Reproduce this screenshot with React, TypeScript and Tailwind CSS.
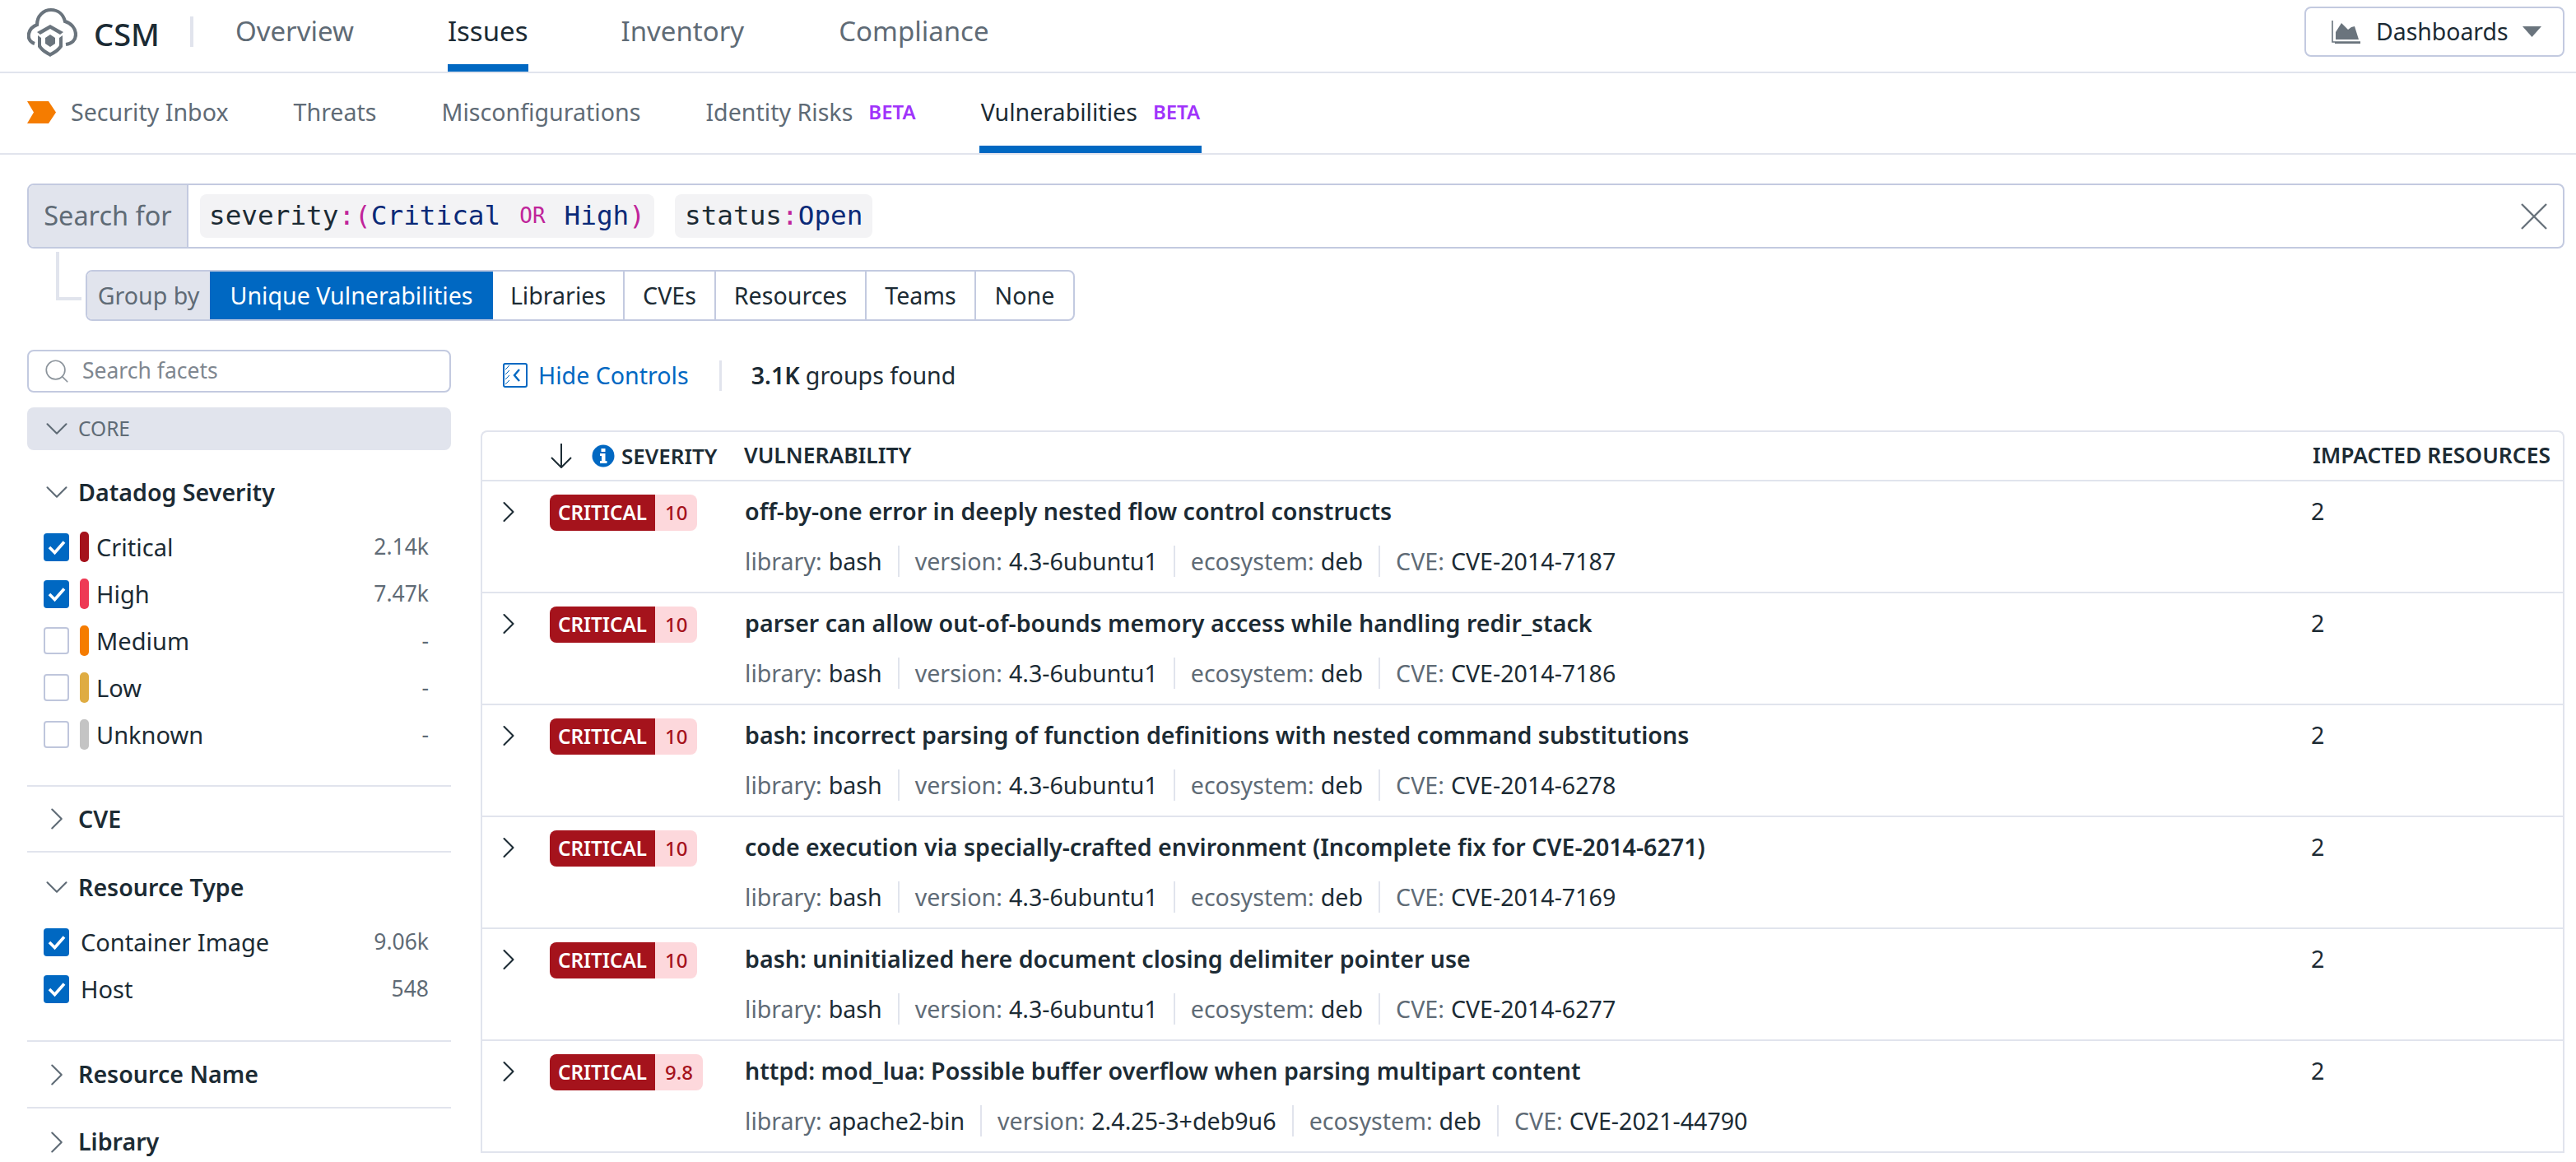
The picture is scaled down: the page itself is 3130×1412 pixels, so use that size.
import { ChevronDown, ChevronRight, Search } from "lucide-react";

const rows = [
  { score: "10", title: "off-by-one error in deeply nested flow control constructs", library: "bash", version: "4.3-6ubuntu1", cve: "CVE-2014-7187" },
  { score: "10", title: "parser can allow out-of-bounds memory access while handling redir_stack", library: "bash", version: "4.3-6ubuntu1", cve: "CVE-2014-7186" },
  { score: "10", title: "bash: incorrect parsing of function definitions with nested command substitutions", library: "bash", version: "4.3-6ubuntu1", cve: "CVE-2014-6278" },
  { score: "10", title: "code execution via specially-crafted environment (Incomplete fix for CVE-2014-6271)", library: "bash", version: "4.3-6ubuntu1", cve: "CVE-2014-7169" },
  { score: "10", title: "bash: uninitialized here document closing delimiter pointer use", library: "bash", version: "4.3-6ubuntu1", cve: "CVE-2014-6277" },
  { score: "9.8", title: "httpd: mod_lua: Possible buffer overflow when parsing multipart content", library: "apache2-bin", version: "2.4.25-3+deb9u6", cve: "CVE-2021-44790" },
];

const severities = [
  { label: "Critical", count: "2.14k", checked: true, color: "bg-[#a5131c]" },
  { label: "High", count: "7.47k", checked: true, color: "bg-[#ee3a54]" },
  { label: "Medium", count: "-", checked: false, color: "bg-[#f57c00]" },
  { label: "Low", count: "-", checked: false, color: "bg-[#dfac42]" },
  { label: "Unknown", count: "-", checked: false, color: "bg-[#c4c4c4]" },
];

const groupOptions = [
  { label: "Libraries", width: "w-[160px]" },
  { label: "CVEs", width: "w-[111px]" },
  { label: "Resources", width: "w-[183px]" },
  { label: "Teams", width: "w-[133px]" },
  { label: "None", width: "w-[118px]" },
];

function Check({ checked }: { checked: boolean }) {
  if (!checked) {
    return <div className="w-[31px] h-[33px] rounded-[4px] border-[2px] border-[#bfc6dc] bg-white shrink-0" />;
  }
  return (
    <div className="w-[31px] h-[34px] rounded-[4px] bg-[#0068c2] flex items-center justify-center shrink-0">
      <svg width="24" height="20" viewBox="0 0 24 20">
        <path d="M3 10L9.5 16.5L21 3.5" fill="none" stroke="#fff" strokeWidth="3.6" />
      </svg>
    </div>
  );
}

function FacetTitle({ label, open }: { label: string; open?: boolean }) {
  return (
    <div className="flex items-center h-[40px]">
      <div className="w-[46px] ml-[13px] h-[40px] flex items-center justify-center shrink-0">
        {open ? (
          <ChevronDown size={46} strokeWidth={1.1} className="text-[#5f6b76] shrink-0" />
        ) : (
          <ChevronRight size={46} strokeWidth={1.1} className="text-[#5f6b76] shrink-0" />
        )}
      </div>
      <span className="ml-[3px] text-[28.6px] font-semibold text-[#1c2b34]">{label}</span>
    </div>
  );
}

function FacetRow({ label, count, checked, color }: { label: string; count: string; checked: boolean; color?: string }) {
  return (
    <div className="flex items-center h-[57px] pl-[20px] pr-[27px]">
      <Check checked={checked} />
      {color && <div className={`ml-[13px] w-[11px] h-[37px] rounded-[5px] ${color}`} />}
      <span className={`text-[29px] text-[#1c2b34] ${color ? "ml-[9px]" : "ml-[14px]"}`}>{label}</span>
      <span className="ml-auto text-[26.5px] text-[#5f6b76]">{count}</span>
    </div>
  );
}

function Meta({ name, value, last }: { name: string; value: string; last?: boolean }) {
  return (
    <div className="flex items-center">
      <span className="text-[#5f6b76]">{name}:</span>
      <span className="ml-[8px] text-[#1c2b34]">{value}</span>
      {!last && <div className="mx-[19px] w-[2px] h-[38px] bg-[#e1e4ed]" />}
    </div>
  );
}

function Row({ row }: { row: (typeof rows)[number] }) {
  return (
    <div className="flex border-b-[2px] border-[#e1e4ed] h-[136px]">
      <div className="w-[82px] pt-[15px] pl-[10px] shrink-0">
        <ChevronRight size={44} strokeWidth={1.15} className="text-[#1c2b34]" />
      </div>
      <div className="w-[237px] pt-[16px] shrink-0">
        <div className="flex h-[44px] w-fit rounded-[8px] overflow-hidden text-[24px]">
          <div className="w-[128px] bg-[#a5131c] text-white flex items-center justify-center text-[24.3px] font-semibold whitespace-nowrap">CRITICAL</div>
          <div className="bg-[#fdd8dc] text-[#a5131c] px-[12px] flex items-center font-medium">{row.score}</div>
        </div>
      </div>
      <div className="flex-1 pt-[17px]">
        <div className="text-[28.6px] leading-[38px] font-semibold text-[#1c2b34]">{row.title}</div>
        <div className="mt-[23px] flex items-center text-[28.6px] leading-[38px]">
          <Meta name="library" value={row.library} />
          <Meta name="version" value={row.version} />
          <Meta name="ecosystem" value="deb" />
          <Meta name="CVE" value={row.cve} last />
        </div>
      </div>
      <div className="w-[306px] pt-[17px] text-[28.6px] leading-[38px] text-[#1c2b34]">2</div>
    </div>
  );
}

export default function App() {
  return (
    <div className="w-[3130px] h-[1412px] overflow-hidden bg-white font-['Noto_Sans',sans-serif] text-[#1c2b34]">
      <div className="h-[89px] border-b-[2px] border-[#e1e4ed] flex items-stretch pl-[33px] pr-[14px]">
        <div className="flex items-center">
          <svg width="61" height="60" viewBox="0 0 61 60" className="mb-[10px]">
            <path d="M9 44C3 42 1 37 2 32C3 26 7 23 12 21C12 10 20 3 29 3C38 3 44 9 46 17C53 19 59 25 59 33C59 40 54 44 47 45" fill="none" stroke="#6a747d" strokeWidth="4.2" />
            <path d="M12 30L28 21L44 30L40 33L28 26L16 33Z" fill="#6a747d" />
            <path d="M13 34L17 37V46C19 50 24 53 28 55C32 53 37 50 39 46V37L43 34V48C39 54 33 57 28 60C23 57 17 54 13 48Z" fill="#6a747d" />
            <path d="M28 33L34 37V44L28 48L22 44V37Z" fill="#6a747d" />
          </svg>
          <span className="ml-[20px] text-[38px] font-medium text-[#1c2b34] mb-[5px]">CSM</span>
          <div className="ml-[37px] w-[4px] h-[37px] bg-[#e1e4ed] mb-[10px]" />
        </div>
        {[
          { label: "Overview", ml: "ml-[51px]" },
          { label: "Issues", ml: "ml-[114px]", active: true },
          { label: "Inventory", ml: "ml-[113px]" },
          { label: "Compliance", ml: "ml-[115px]" },
        ].map((t) => (
          <div
            key={t.label}
            className={`${t.ml} h-[87px] flex items-center pb-[2px] text-[33px] border-b-[9px] ${t.active ? "border-[#0068c2] text-[#1c2b34]" : "border-transparent text-[#5f6b76]"}`}
          >
            {t.label}
          </div>
        ))}
        <div className="ml-auto mt-[8px] w-[316px] h-[61px] rounded-[8px] border-[2px] border-[#c3cae0] flex items-center pl-[31px]">
          <svg width="36" height="28" viewBox="0 0 36 28">
            <path d="M1 0V26H35" fill="none" stroke="#6a747d" strokeWidth="1.6" />
            <path d="M5 23L5 14L12 3L20 11L24 8L28 7L33 23Z" fill="#6a747d" />
            <path d="M4 26H35V28H4Z" fill="#6a747d" />
          </svg>
          <span className="ml-[18px] text-[28.4px] text-[#1c2b34]">Dashboards</span>
          <svg width="23" height="13" viewBox="0 0 23 13" className="ml-[17px]">
            <path d="M0 0H23L11.5 13Z" fill="#6a747d" />
          </svg>
        </div>
      </div>

      <div className="h-[99px] border-b-[2px] border-[#e1e4ed] flex items-stretch pl-[33px]">
        <div className="flex items-center text-[28.6px] text-[#5f6b76] pb-[3px]">
          <svg width="36" height="27" viewBox="0 0 36 27">
            <path d="M0 0H26L35 13.5L26 27H0L8 13.5Z" fill="#f57c00" />
          </svg>
          <span className="ml-[17px]">Security Inbox</span>
          <span className="ml-[79px]">Threats</span>
          <span className="ml-[79px]">Misconfigurations</span>
          <span className="ml-[79px]">Identity Risks</span>
          <span className="ml-[19px] text-[24px] font-semibold text-[#a033fb]">BETA</span>
        </div>
        <div className="ml-[77px] h-[97px] flex items-center border-b-[9px] border-[#0068c2] text-[28.6px] pl-[2px] pr-[2px] pt-[6px]">
          <span className="text-[#1c2b34]">Vulnerabilities</span>
          <span className="ml-[19px] text-[24px] font-semibold text-[#a033fb]">BETA</span>
        </div>
      </div>

      <div className="mt-[35px] ml-[33px] mr-[14px] h-[79px] rounded-[8px] border-[2px] border-[#c3cae0] flex items-stretch">
        <div className="w-[194px] bg-[#e1e4ed] rounded-l-[6px] border-r-[2px] border-[#c3cae0] flex items-center justify-center text-[32.5px] text-[#5f6b76] shrink-0">
          Search for
        </div>
        <div className="flex-1 flex items-center font-['DejaVu_Sans_Mono',monospace] text-[32.7px] pl-[14px]">
          <div className="h-[53px] bg-[#f3f3f5] rounded-[8px] px-[11px] flex items-center whitespace-pre">
            <span>severity</span>
            <span className="text-[#c0249a]">:(</span>
            <span className="text-[#0b2a78]">Critical</span>
            <span className="mx-[23px] text-[#c0249a] text-[26px]">OR</span>
            <span className="text-[#0b2a78]">High</span>
            <span className="text-[#c0249a]">)</span>
          </div>
          <div className="ml-[25px] h-[53px] bg-[#f3f3f5] rounded-[8px] px-[12px] flex items-center whitespace-pre">
            <span>status</span>
            <span className="text-[#c0249a]">:</span>
            <span className="text-[#0b2a78]">Open</span>
          </div>
          <svg width="32" height="32" viewBox="0 0 32 32" className="ml-auto mr-[19px]">
            <path d="M1 1L31 31M31 1L1 31" stroke="#6a747d" strokeWidth="2.4" />
          </svg>
        </div>
      </div>

      <div className="flex items-start h-[88px] pl-[68px]">
        <div className="w-[31px] h-[59px] mt-[4px] border-l-[4px] border-b-[4px] border-[#e1e4ed] shrink-0" />
        <div className="ml-[5px] mt-[26px] h-[62px] flex rounded-[8px] border-[2px] border-[#c3cae0] text-[28.6px] overflow-hidden">
          <div className="w-[149px] bg-[#e1e4ed] text-[#5f6b76] flex items-center justify-center">Group by</div>
          <div className="w-[344px] -my-[2px] bg-[#0068c2] text-white flex items-center justify-center">Unique Vulnerabilities</div>
          {groupOptions.map((g, i) => (
            <div
              key={g.label}
              className={`${g.width} flex items-center justify-center text-[#1c2b34] ${i < groupOptions.length - 1 ? "border-r-[2px] border-[#c3cae0]" : ""}`}
            >
              {g.label}
            </div>
          ))}
        </div>
      </div>

      <div className="flex mt-[35px] pl-[33px] pr-[14px]">
        <div className="w-[515px] shrink-0">
          <div className="h-[52px] rounded-[8px] border-[2px] border-[#c3cae0] flex items-center pl-[17px]">
            <Search size={34} strokeWidth={1.2} className="text-[#8c949c]" />
            <span className="ml-[14px] text-[26.5px] text-[#7f8790]">Search facets</span>
          </div>
          <div className="mt-[18px] h-[52px] rounded-[8px] bg-[#e1e4ed] flex items-center">
            <div className="w-[46px] ml-[13px] flex justify-center shrink-0">
              <ChevronDown size={46} strokeWidth={1.1} className="text-[#5f6b76] shrink-0" />
            </div>
            <span className="ml-[3px] text-[24.5px] text-[#5f6b76]">CORE</span>
          </div>
          <div className="pt-[31px] h-[409px] border-b-[2px] border-[#e1e4ed]">
            <FacetTitle label="Datadog Severity" open />
            <div className="mt-[18px]">
              {severities.map((s) => (
                <FacetRow key={s.label} {...s} />
              ))}
            </div>
          </div>
          <div className="h-[80px] flex items-center border-b-[2px] border-[#e1e4ed]">
            <FacetTitle label="CVE" />
          </div>
          <div className="pt-[22px] h-[230px] border-b-[2px] border-[#e1e4ed]">
            <FacetTitle label="Resource Type" open />
            <div className="mt-[18px]">
              <FacetRow label="Container Image" count="9.06k" checked />
              <FacetRow label="Host" count="548" checked />
            </div>
          </div>
          <div className="h-[81px] flex items-center border-b-[2px] border-[#e1e4ed]">
            <FacetTitle label="Resource Name" />
          </div>
          <div className="h-[81px] flex items-center">
            <FacetTitle label="Library" />
          </div>
        </div>

        <div className="ml-[36px] flex-1 min-w-0">
          <div className="mt-[6px] h-[50px] flex items-center pl-[27px]">
            <svg width="30" height="30" viewBox="0 0 30 30">
              <rect x="1" y="1" width="28" height="28" rx="2" fill="none" stroke="#0068c2" strokeWidth="2" />
              <path d="M3 8L8 3M3 14L8 9M3 20L8 15M3 26L8 21" stroke="#0068c2" strokeWidth="1" />
              <path d="M20 8L14 15L20 22" fill="none" stroke="#0068c2" strokeWidth="2.4" />
            </svg>
            <span className="ml-[13px] text-[28.6px] text-[#0068c2]">Hide Controls</span>
            <div className="ml-[37px] w-[3px] h-[37px] bg-[#e1e4ed]" />
            <span className="ml-[36px] text-[28.6px] font-semibold text-[#1c2b34]">3.1K</span>
            <span className="ml-[7px] text-[28.6px] text-[#1c2b34]">groups found</span>
          </div>
          <div className="mt-[42px] rounded-t-[8px] border-l-[2px] border-r-[2px] border-t-[2px] border-[#e1e4ed]">
            <div className="flex items-center h-[60px] border-b-[2px] border-[#e1e4ed] text-[26.4px] font-semibold text-[#1c2b34]">
              <svg width="26" height="30" viewBox="0 0 26 30" className="ml-[83px]">
                <path d="M13 0V29M1 17L13 29L25 17" fill="none" stroke="#1c2b34" strokeWidth="2" />
              </svg>
              <svg width="28" height="28" viewBox="0 0 28 28" className="ml-[24px]">
                <circle cx="14" cy="14" r="13.5" fill="#0068c2" />
                <rect x="11.5" y="5" width="5" height="4" fill="#fff" />
                <path d="M10 11H16.5V20H18.5V23H10V20H12V14H10Z" fill="#fff" />
              </svg>
              <span className="ml-[8px] w-[149px] shrink-0 text-[26px]">SEVERITY</span>
              <span>VULNERABILITY</span>
              <span className="ml-auto w-[304px] whitespace-nowrap">IMPACTED RESOURCES</span>
            </div>
            {rows.map((row) => (
              <Row key={row.cve} row={row} />
            ))}
          </div>
        </div>
      </div>
    </div>
  );
}
